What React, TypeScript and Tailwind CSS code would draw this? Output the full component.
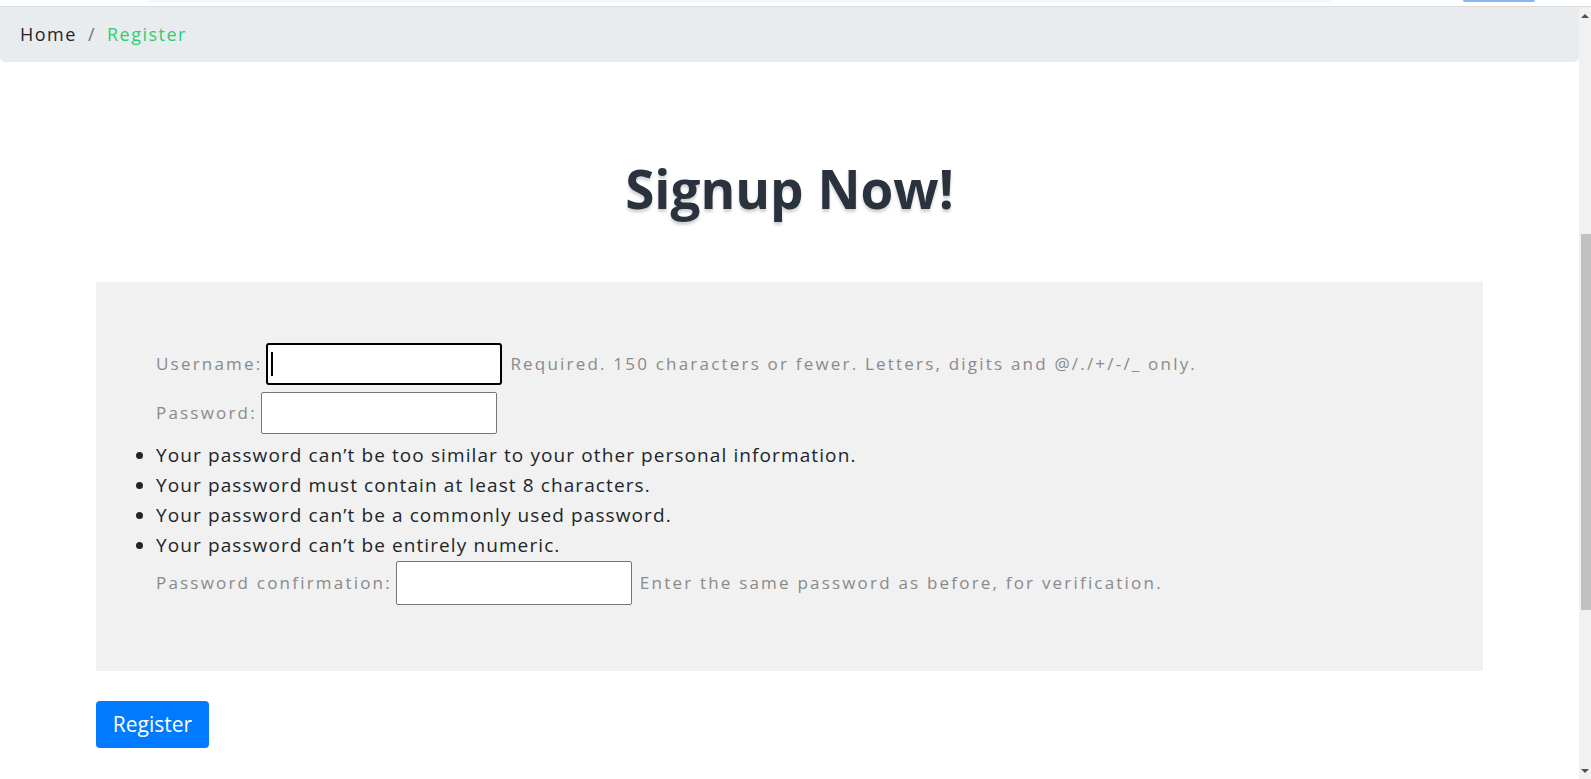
import React from 'react';

const rules = [
  'Your password can’t be too similar to your other personal information.',
  'Your password must contain at least 8 characters.',
  'Your password can’t be a commonly used password.',
  'Your password can’t be entirely numeric.',
];

function Scrollbar() {
  return (
    <div className="w-[12px] shrink-0 bg-[#f1f1f1] flex flex-col">
      <div className="h-[17px] flex items-center justify-center">
        <div className="w-0 h-0 border-l-[4px] border-r-[4px] border-b-[4px] border-l-transparent border-r-transparent border-b-[#505050]" />
      </div>
      <div className="flex-1 flex flex-col pl-[2px]">
        <div className="h-[210px]" />
        <div className="h-[376px] bg-[#c1c1c1]" />
      </div>
      <div className="h-[17px] flex items-center justify-center">
        <div className="w-0 h-0 border-l-[4px] border-r-[4px] border-t-[4px] border-l-transparent border-r-transparent border-t-[#505050]" />
      </div>
    </div>
  );
}

export default function App() {
  return (
    <div className="h-screen flex flex-col bg-white overflow-hidden" style={{ fontFamily: '"Open Sans", "Liberation Sans", sans-serif' }}>
      {/* bottom of the navbar, scrolled away */}
      <div className="h-[7px] shrink-0 flex border-b border-[#dcdcdc]">
        <div className="w-[147px]" />
        <div className="w-[1185px] h-[3px] bg-[#f7f7f7] rounded-b" />
        <div className="w-[131px]" />
        <div className="w-[72px] h-[2px] bg-[#8ab4f8] rounded-b" />
      </div>

      <div className="flex flex-1 min-h-0">
        <div className="flex-1 flex flex-col">
          {/* Breadcrumb */}
          <nav className="h-[55px] bg-[#e9ecef] rounded-b-[5px] flex items-center px-[20px] text-[18px] tracking-[1.5px]">
            <span className="text-[#212529]">Home</span>
            <span className="text-[#6c757d] px-[11px]">/</span>
            <span className="text-[#2ecc71]">Register</span>
          </nav>

          <h1 className="mt-[95px] mb-[2px] text-center text-[53px] leading-[64px] font-bold text-[#2a333d] [text-shadow:0_3px_3px_rgba(0,0,0,0.18)]">
            Signup Now!
          </h1>

          <div className="mx-[96px] mt-[59px]">
            <form className="bg-[#f0f1f0] pt-[61px] pb-[66px] pl-[60px] pr-[60px]">
              <div className="flex items-center gap-[4px] h-[42px] text-[17px] tracking-[2.2px] text-[#8a8a8a]">
                <label>Username:</label>
                <div className="w-[236px] h-[42px] bg-white border-2 border-black rounded-[3px] flex items-center pl-[3px]">
                  <div className="w-[2px] h-[24px] bg-black" />
                </div>
                <span className="ml-[4px]">Required. 150 characters or fewer. Letters, digits and @/./+/-/_ only.</span>
              </div>

              <div className="flex items-center gap-[4px] h-[42px] mt-[7px] text-[17px] tracking-[2.2px] text-[#8a8a8a]">
                <label>Password:</label>
                <input type="password" className="w-[236px] h-[42px] bg-white border border-[#767676] rounded-[2px]" />
              </div>

              <ul className="list-disc mt-[6px] text-[19px] tracking-[1.1px] leading-[30px] text-[#212529]">
                {rules.map((r) => (
                  <li key={r}>{r}</li>
                ))}
              </ul>

              <div className="flex items-center gap-[4px] h-[44px] mt-[1px] text-[17px] tracking-[2.2px] text-[#8a8a8a]">
                <label>Password confirmation:</label>
                <input type="password" className="w-[236px] h-[44px] bg-white border border-[#767676] rounded-[2px]" />
                <span className="ml-[4px]">Enter the same password as before, for verification.</span>
              </div>
            </form>

            <button className="mt-[30px] w-[113px] h-[47px] bg-[#007bff] text-white text-[21px] rounded-[4px]">
              Register
            </button>
          </div>
        </div>
        <Scrollbar />
      </div>
    </div>
  );
}
